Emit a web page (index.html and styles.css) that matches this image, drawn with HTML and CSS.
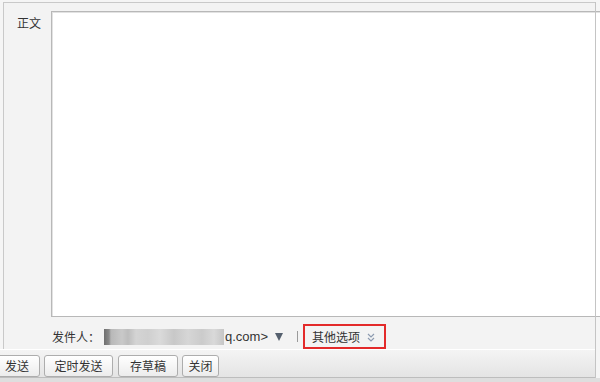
FILE: index.html
```html
<!DOCTYPE html>
<html lang="zh-CN">
<head>
<meta charset="utf-8">
<title>写信</title>
<link rel="stylesheet" href="styles.css">
</head>
<body>
<div class="page">
  <div class="frame">
    <div class="editor">
      <div class="label">正文</div>
      <div class="content-box"></div>
    </div>
    <div class="sender">
      <span class="sender-label">发件人：</span>
      <span class="masked"></span>
      <span class="addr">q.com&gt;</span>
      <span class="caret"></span>
      <span class="sep"></span>
      <span class="more">其他选项
        <svg class="chev" width="8" height="9" viewBox="0 0 8 9"><polyline points="1,1 4,4 7,1" fill="none" stroke="#8d9bb0" stroke-width="1.2"/><polyline points="1,5 4,8 7,5" fill="none" stroke="#8d9bb0" stroke-width="1.2"/></svg>
      </span>
    </div>
  </div>
  <div class="toolbar">
    <button class="btn btn-send">发送</button>
    <button class="btn btn-timed">定时发送</button>
    <button class="btn btn-draft">存草稿</button>
    <button class="btn btn-close">关闭</button>
  </div>
  <div class="shade"></div>
</div>
</body>
</html>
```

FILE: styles.css
```css
html, body {
  margin: 0;
  padding: 0;
  background: #f5f5f5;
  overflow: hidden;
  font-family: "Noto Sans CJK SC", "Liberation Sans", sans-serif;
  font-size: 12px;
  color: #333;
}
.page {
  position: relative;
  width: 600px;
  height: 382px;
  padding-top: 2px;
  box-sizing: border-box;
}
.page::after {
  content: "";
  position: absolute;
  left: 595px;
  top: 2px;
  width: 1px;
  height: 376px;
  background: #c4c4c4;
}
.frame {
  margin-left: 3px;
  width: 593px;
  height: 347px;
  box-sizing: border-box;
  border-top: 1px solid #c9c9c9;
  border-left: 1px solid #c9c9c9;
  background: #f3f3f3;
}
.editor {
  display: flex;
  padding-top: 8px;
}
.label {
  flex: 0 0 47px;
  box-sizing: border-box;
  padding-left: 13px;
  margin-top: 4px;
  line-height: 16px;
  color: #333;
}
.content-box {
  flex: 1;
  margin-right: -8px;
  height: 306px;
  box-sizing: border-box;
  background: #fff;
  border: 1px solid #b8b8b8;
  box-shadow: inset 1px 1px 0 #e2e2e2;
}
.sender {
  display: flex;
  align-items: center;
  height: 25px;
  margin-top: 7px;
  padding-left: 48px;
}
.sender-label {
  line-height: 16px;
  color: #333;
}
.masked {
  width: 120px;
  height: 16px;
  margin-left: 4px;
  filter: blur(0.6px);
  background: linear-gradient(90deg,
    #6f6f6f 0, #8a8a8a 5px, #b8b8b8 7px, #c9c9c9 18px, #bdbdbd 24px,
    #d4d4d4 32px, #cfcfcf 44px, #dadada 56px, #c8c8c8 70px,
    #d6d6d6 84px, #cbcbcb 98px, #d9d9d9 110px, #c6c6c6 120px);
}
.addr {
  margin-left: 1px;
  font-family: "Liberation Sans", sans-serif;
  font-size: 13px;
  line-height: 16px;
  color: #333;
}
.caret {
  width: 0;
  height: 0;
  margin-left: 7px;
  margin-top: 1px;
  border-left: 4px solid transparent;
  border-right: 4px solid transparent;
  border-top: 8px solid #55606e;
}
.sep {
  width: 1px;
  height: 11px;
  margin-left: 14px;
  background: #9a9a9a;
}
.more {
  display: flex;
  align-items: center;
  gap: 7px;
  margin-left: 5px;
  height: 25px;
  width: 83px;
  box-sizing: border-box;
  padding-left: 7px;
  border: 2px solid #e32a2a;
  line-height: 16px;
  color: #333;
}
.chev {
  display: block;
  margin-top: 1px;
}
.toolbar {
  display: flex;
  align-items: flex-end;
  gap: 4px;
  width: 596px;
  height: 29px;
  box-sizing: border-box;
  border-top: 1px solid #ffffff;
  border-bottom: 1px solid #bdbdbd;
  background: linear-gradient(#f4f4f4, #e4e4e4);
}
.btn {
  height: 22px;
  padding: 0;
  font-family: "Noto Sans CJK SC", "Liberation Sans", sans-serif;
  font-size: 12px;
  line-height: 20px;
  color: #333;
  border: 1px solid #adadad;
  border-radius: 3px;
  background: linear-gradient(#ffffff, #ececec);
}
.btn-send { width: 46px; margin-left: -6px; }
.btn-timed { width: 69px; }
.btn-draft { width: 60px; margin-left: 1px; }
.btn-close { width: 37px; }
.shade {
  height: 5px;
  background: #dedede;
}
```
